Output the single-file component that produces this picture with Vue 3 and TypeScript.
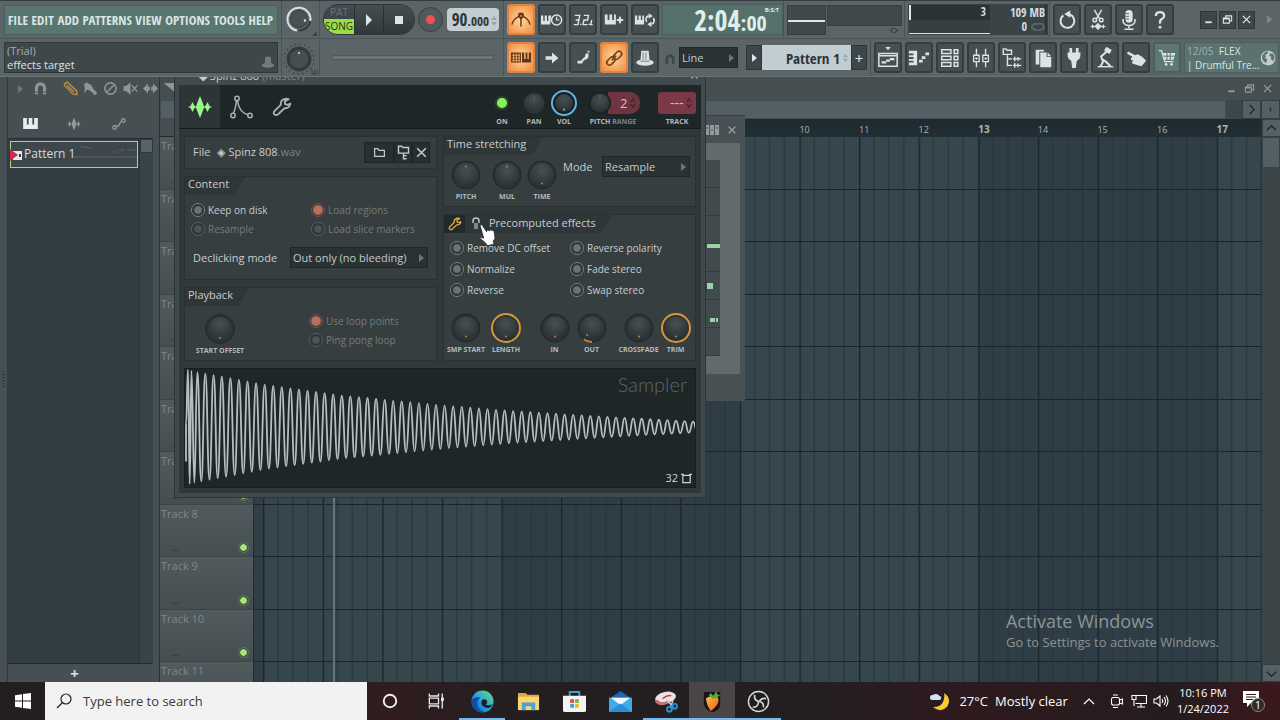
<script setup lang="ts">
interface KnobSpec {
  label: string
  /** pointer angle in degrees, 0 = up */
  angle: number
  ring?: 'orange' | 'blue' | 'out'
}
interface Toggle {
  label: string
  on?: boolean
  dim?: boolean
}

const menus = ['FILE', 'EDIT', 'ADD', 'PATTERNS', 'VIEW', 'OPTIONS', 'TOOLS', 'HELP']

const modeTools = [
  { icon: 'metronome', label: 'Metronome', lit: true },
  { icon: 'waitkeys', label: 'Wait for input', lit: false },
  { icon: 'countdown', label: 'Countdown', lit: false },
  { icon: 'overdub', label: 'Overdub', lit: false },
  { icon: 'looprec', label: 'Loop record', lit: false },
]
const editTools = [
  { icon: 'typing', label: 'Typing keyboard', lit: true },
  { icon: 'arrow', label: 'Step edit', lit: false },
  { icon: 'slide', label: 'Slide', lit: false },
  { icon: 'link', label: 'Link', lit: true },
  { icon: 'hat', label: 'Multilink', lit: false },
]
const fileTools = [
  { icon: 'undo', label: 'Undo' },
  { icon: 'cut', label: 'Cut' },
  { icon: 'mic', label: 'Record audio' },
  { icon: 'help', label: 'Help' },
]
const viewTools = [
  { icon: 'playlist', label: 'Playlist' },
  { icon: 'piano', label: 'Piano roll' },
  { icon: 'rack', label: 'Channel rack' },
  { icon: 'mixer', label: 'Mixer' },
  { icon: 'browser', label: 'Browser' },
  { icon: 'pages', label: 'Projects' },
  { icon: 'plug', label: 'Plugins' },
  { icon: 'tempo', label: 'Tempo tapper' },
  { icon: 'touch', label: 'Touch' },
]

const tracks = Array.from({ length: 11 }, (_, i) => `Track ${i + 1}`)

const barWidth = 59.6
const gridLeft = 9
const firstLabelledBar = 10
const bars = Array.from({ length: 17 }, (_, i) => ({
  n: i + 1,
  x: gridLeft + i * barWidth + 1,
  major: i % 4 === 0,
})).filter((b) => b.n >= firstLabelledBar)

const contentToggles: Toggle[] = [
  { label: 'Keep on disk' },
  { label: 'Load regions', on: true, dim: true },
  { label: 'Resample', dim: true },
  { label: 'Load slice markers', dim: true },
]
const loopToggles: Toggle[] = [
  { label: 'Use loop points', on: true, dim: true },
  { label: 'Ping pong loop', dim: true },
]
const effectToggles: Toggle[] = [
  { label: 'Remove DC offset' },
  { label: 'Reverse polarity' },
  { label: 'Normalize' },
  { label: 'Fade stereo' },
  { label: 'Reverse' },
  { label: 'Swap stereo' },
]
const stretchKnobs: KnobSpec[] = [
  { label: 'PITCH', angle: 0 },
  { label: 'MUL', angle: 0 },
  { label: 'TIME', angle: 180 },
]
const effectKnobs: KnobSpec[][] = [
  [
    { label: 'SMP START', angle: 180 },
    { label: 'LENGTH', angle: 180, ring: 'orange' },
  ],
  [
    { label: 'IN', angle: 180 },
    { label: 'OUT', angle: 215, ring: 'out' },
  ],
  [
    { label: 'CROSSFADE', angle: 180 },
    { label: 'TRIM', angle: 180, ring: 'orange' },
  ],
]

/** Amplitude envelope of the sample: [x, half height]. */
const envelope: [number, number][] = [
  [0, 59], [12, 56], [80, 43], [157, 32], [257, 22], [323, 16.5], [410, 11], [490, 6.5], [520, 5],
]
function amplitude(x: number): number {
  for (let i = 1; i < envelope.length; i++) {
    const [x0, a0] = envelope[i - 1]
    const [x1, a1] = envelope[i]
    if (x <= x1) return a0 + ((a1 - a0) * (x - x0)) / (x1 - x0)
  }
  return 5
}
function buildWave(): string {
  const mid = 59
  const peaks = [3, 6.4, 12.3, 20.3, 28.6, 36.8]
  while (peaks[peaks.length - 1] < 514) peaks.push(peaks[peaks.length - 1] + 8.57)
  let d = `M1 94 L1 56`
  let px = 1
  let py = 56
  const go = (x: number, y: number) => {
    const m = (px + x) / 2
    d += ` C${m.toFixed(1)} ${py.toFixed(1)} ${m.toFixed(1)} ${y.toFixed(1)} ${x.toFixed(1)} ${y.toFixed(1)}`
    px = x
    py = y
  }
  peaks.forEach((x, i) => {
    go(x, mid - amplitude(x))
    const next = peaks[i + 1]
    if (next !== undefined) {
      const t = (x + next) / 2
      go(t, mid + amplitude(t))
    }
  })
  return d
}
const wave = buildWave()

const apps = [
  { icon: 'cortana', label: 'Cortana', open: false, active: false },
  { icon: 'taskview', label: 'Task View', open: false, active: false },
  { icon: 'edge', label: 'Edge', open: true, active: false },
  { icon: 'folder', label: 'File Explorer', open: false, active: false },
  { icon: 'store', label: 'Store', open: false, active: false },
  { icon: 'mail', label: 'Mail', open: false, active: false },
  { icon: 'snip', label: 'Snipping Tool', open: true, active: false },
  { icon: 'fruit', label: 'Studio', open: true, active: true },
  { icon: 'obs', label: 'Recorder', open: true, active: false },
]
</script>

<template>
  <svg class="defs" aria-hidden="true">
    <defs>
      <radialGradient id="g-knob" cx="50%" cy="30%" r="70%">
        <stop offset="0" stop-color="#465052" />
        <stop offset="1" stop-color="#2a3133" />
      </radialGradient>
      <linearGradient id="g-edge" x1="0" y1="1" x2="1" y2="0">
        <stop offset="0" stop-color="#1259b0" />
        <stop offset="0.5" stop-color="#27a6de" />
        <stop offset="1" stop-color="#6fe06a" />
      </linearGradient>
      <linearGradient id="g-fruit" x1="0" y1="0" x2="1" y2="1">
        <stop offset="0" stop-color="#ffc043" />
        <stop offset="1" stop-color="#ee5a1c" />
      </linearGradient>
      <symbol id="i-keys" viewBox="0 0 16 12"><path fill="currentColor" d="M0 0h4v7h2V0h4v7h2V0h4v12H0z" /></symbol>
      <symbol id="i-metronome" viewBox="0 0 24 24"><path d="M12 4v15M2 17q2-7 8-9M22 17q-2-7-8-9" fill="none" stroke="#6b3414" stroke-width="1.600" /><path d="M9.500 4h5l1 4-3.500 4-3.500-4z" fill="#6b3414" /><circle cx="12" cy="7.500" r="1" fill="#e8a05c" /></symbol>
      <symbol id="i-waitkeys" viewBox="0 0 24 24"><path fill="currentColor" d="M0 7h2.500v6H4V7h2.500v6H8V7h3l-1 10H0z" /><circle cx="17" cy="12" r="5.500" fill="none" stroke="currentColor" stroke-width="1.600" /><path d="M17 8.500V12h3" fill="none" stroke="currentColor" stroke-width="1.300" /></symbol>
      <symbol id="i-countdown" viewBox="0 0 24 24"><path d="M3 7h5.500l-1 5H4M7.500 12l-1 5H2M13 7h5l-1 5h-4l-1 5h5M21.500 12l-1 5h2M9.500 16v1.500M19 16v1.500" fill="none" stroke="currentColor" stroke-width="1.500" /></symbol>
      <symbol id="i-overdub" viewBox="0 0 24 24"><path fill="currentColor" d="M2 6h3v6h2V6h3v6h2V6h2v11H2z" /><path d="M18.500 8.500v7M15 12h7" stroke="currentColor" stroke-width="2.200" /></symbol>
      <symbol id="i-looprec" viewBox="0 0 24 24"><path fill="currentColor" d="M1 7h2.500v5H5V7h2.500v5H9V7h2v10H1z" /><path d="M14 14a4 4 0 0 1 2-6.500M21 10a4 4 0 0 1-2 6.500" fill="none" stroke="currentColor" stroke-width="1.800" /><path fill="currentColor" d="M16 4.500l4.500 3-4.500 3zM19 19.500l-4.500-3 4.500-3z" /></symbol>
      <symbol id="i-typing" viewBox="0 0 24 24"><path fill="#6b3414" d="M1 6h11v11H1z" /><path d="M2 9h9M2 12h9M2 15h9M4 7v9M7 7v9M10 7v9" stroke="#f5b266" stroke-width=".9" /><path fill="#6b3414" d="M13 6h2.500v7h1.500V6h2v7h1.500V6H23v11H13z" /></symbol>
      <symbol id="i-arrow" viewBox="0 0 24 24"><path fill="currentColor" d="M5 10h7V6l7 6-7 6v-4H5z" /></symbol>
      <symbol id="i-slide" viewBox="0 0 24 24"><path fill="currentColor" d="M17 4h2v2h-2zM15 7h3v4q-1 3-4 3-2 1-3 4H6v-3h4q1-2 4-4z" /></symbol>
      <symbol id="i-link" viewBox="0 0 24 24"><g fill="none" stroke="#7a4117" stroke-width="1.800"><rect x="11" y="6" width="10" height="6" rx="3" transform="rotate(-45 16 9)" /><rect x="3.500" y="12.500" width="10" height="6" rx="3" transform="rotate(-45 8.500 15.500)" /><path d="M9.500 14.500l5-5" /></g></symbol>
      <symbol id="i-hat" viewBox="0 0 24 24"><path fill="currentColor" d="M8 4h8l1 11H7z" /><ellipse cx="12" cy="17" rx="9.500" ry="3.500" fill="currentColor" /><path d="M10 6v8M13 6v8M7 15.500h10" stroke="#6d787b" stroke-width="1" /></symbol>
      <symbol id="i-undo" viewBox="0 0 24 24"><path d="M8 7a7.500 7.500 0 1 0 7-1" fill="none" stroke="currentColor" stroke-width="2.200" /><path fill="currentColor" d="M15.500 1.500v8L9 5.500z" /></symbol>
      <symbol id="i-cut" viewBox="0 0 24 24"><g fill="none" stroke="currentColor" stroke-width="1.600"><path d="M8 1l6 10M16 1l-6 10" /><circle cx="8.500" cy="12" r="2" /><circle cx="15.500" cy="12" r="2" /></g><path fill="currentColor" d="M3 19l2-.5 1-2 1.500 2L9 18l3-3 3 3 1.500.5 1.500-2 1 2 2 .5-2 .5-1 2-1.500-2-1.500.5-3 3-3-3-1.500-.5-1.500 2-1-2z" /></symbol>
      <symbol id="i-mic" viewBox="0 0 24 24"><rect x="8" y="1" width="8" height="14" rx="4" fill="currentColor" /><path d="M8 5h4M8 8h4M8 11h4" stroke="#59656a" /><path d="M5.500 11v2a6.500 5 0 0 0 13 0v-2M12 18v3M7 22h10" fill="none" stroke="currentColor" stroke-width="1.700" /></symbol>
      <symbol id="i-help" viewBox="0 0 24 24"><path d="M7.500 7.500q0-4 4.500-4t4.500 4q0 2-2.500 3.500T12 16" fill="none" stroke="currentColor" stroke-width="2.500" /><circle cx="12" cy="20" r="1.600" fill="currentColor" /></symbol>
      <symbol id="i-playlist" viewBox="0 0 24 24"><path fill="currentColor" d="M9 0h6l-3 3.500z" /><path fill="none" stroke="currentColor" stroke-width="1.600" d="M2 7h20v14H2zM2 9.500h20" /><path fill="currentColor" d="M5 15.500h5V18H5zM10 13.500h4V16h-4zM14 12h5v2.500h-5z" /></symbol>
      <symbol id="i-piano" viewBox="0 0 24 24"><path fill="currentColor" d="M1 4h9v16H1v-3h5v-2H1v-2h5v-2H1V9h5V7H1zM12 14h4v3h-4zM15 10h4v3h-4zM19 6h4v3h-4z" /></symbol>
      <symbol id="i-rack" viewBox="0 0 24 24"><g fill="none" stroke="currentColor" stroke-width="1.600"><path d="M3 3h10v4H3zM3 10h10v4H3zM3 17h10v4H3zM16.500 3h4v4h-4zM16.500 10h4v4h-4zM16.500 17h4v4h-4z" /></g></symbol>
      <symbol id="i-mixer" viewBox="0 0 24 24"><path d="M7 2v20M17 2v20" stroke="currentColor" stroke-width="1.500" /><path d="M4 9h6v7H4zM14 9h6v7h-6z" fill="#39434a" stroke="currentColor" stroke-width="1.500" /><circle cx="7" cy="12.500" r="1.300" fill="currentColor" /><circle cx="17" cy="12.500" r="1.300" fill="currentColor" /></symbol>
      <symbol id="i-browser" viewBox="0 0 24 24"><g fill="none" stroke="currentColor" stroke-width="1.500"><path d="M2.500 2h3l1 1.500h5V8h-9zM7 9v12M7 13h5M7 20h5" /><path d="M13 13h9M13 20h9M15 10.500v5M18.500 11v4M15 17.500v5M18.500 18v4" /></g></symbol>
      <symbol id="i-pages" viewBox="0 0 24 24"><path fill="currentColor" d="M4 3h9v2H8v14H4z" /><path fill="currentColor" d="M9 6h7v5h5v11H9zM17 6l4 4h-4z" /></symbol>
      <symbol id="i-plug" viewBox="0 0 24 24"><path fill="currentColor" d="M7 1h3v5h4V1h3v5h2v3q0 4-4 6l-1 8h-4l-1-8q-4-2-4-6V6h2z" /></symbol>
      <symbol id="i-tempo" viewBox="0 0 24 24"><path d="M7 11L15 4M8 11l2 5-3 5M8 13l5 3 5 5" fill="none" stroke="currentColor" stroke-width="2.200" /><rect x="12" y="1" width="7" height="5" rx="1" transform="rotate(30 15 3)" fill="currentColor" /><path d="M4 21.500h17" stroke="currentColor" stroke-width="1.500" /></symbol>
      <symbol id="i-touch" viewBox="0 0 24 24"><path fill="currentColor" d="M2 7l1.500-2 7.500 4 3-1 5 3 4 4-5 6-4-1-6-2-.5-2 2-1-3-1v-2l2-1z" /></symbol>
      <symbol id="i-cart" viewBox="0 0 24 24"><path d="M3 4h3l3.500 12H19" fill="none" stroke="currentColor" stroke-width="1.500" /><path fill="currentColor" d="M7.500 6.500H21L19 14H9.500z" /><path d="M12 6v8M15.500 6v8M8 10h12" stroke="#55686a" /><circle cx="11" cy="19" r="1.500" fill="currentColor" /><circle cx="17" cy="19" r="1.500" fill="currentColor" /></symbol>
      <symbol id="i-globe" viewBox="0 0 24 24"><circle cx="12" cy="12" r="11" fill="#c3cccb" /><path fill="#5a7370" d="M4 7q4-5 8-5l-1 4-3 1 1 3-2 2 4 2-2 6q-5-3-6-8zM15 5l5 1 2 6-3 5-3-4 1-3-3-1z" /></symbol>
      <symbol id="i-magnet" viewBox="0 0 24 24"><path d="M5.500 21V11a6.500 6.500 0 0 1 13 0v10" fill="none" stroke="currentColor" stroke-width="5" /><path d="M2 17.500h7M15 17.500h7" stroke="#4a5457" stroke-width="1.500" /></symbol>
      <symbol id="i-sound" viewBox="0 0 24 24"><path fill="currentColor" d="M0 12l2.500-1L4.500 7l2 4L8 11.500 10 6l2-5 2 5 2 5.500 1.500-.5 2-4 2 4 2.500 1-2.500 1-2 4-2-4-1.500-.5-2 5.500-2 5-2-5-2-5.500-1.500.5-2 4-2-4z" /></symbol>
      <symbol id="i-env" viewBox="0 0 24 24"><g fill="none" stroke="currentColor" stroke-width="1.500"><circle cx="8" cy="3.500" r="2.200" /><circle cx="4" cy="20.500" r="2.200" /><circle cx="21" cy="20.500" r="2.200" /><path d="M7.500 6Q6.500 14 4.500 18M8.500 6q2 12 10.500 13.500" /></g></symbol>
      <symbol id="i-wrench" viewBox="0 0 24 24"><path fill="none" stroke="currentColor" stroke-width="2.200" stroke-linejoin="round" d="M22 8q-1 6-7 5.500L7 21q-2 1.500-4 0t0-4l7.500-7.500Q10 4 14.500 2.500q3-1 5.500 0L15.500 5v3.500l3.500 1z" /></symbol>
      <symbol id="i-folderline" viewBox="0 0 24 24"><path d="M3 5h6l2 3h10v11H3z" fill="none" stroke="currentColor" stroke-width="2.200" /></symbol>
      <symbol id="i-folderdown" viewBox="0 0 24 24"><path d="M4 2h5l2 2h9v9H4zM12 13v10M12 17h5M12 22h5" fill="none" stroke="currentColor" stroke-width="2.200" /></symbol>
      <symbol id="i-x" viewBox="0 0 24 24"><path d="M4 4l16 16M20 4L4 20" stroke="currentColor" stroke-width="2.800" /></symbol>
      <symbol id="i-min" viewBox="0 0 24 24"><path d="M5 18h14" stroke="currentColor" stroke-width="4" /></symbol>
      <symbol id="i-restore" viewBox="0 0 24 24"><path d="M3 9h13v11H3zM8 8V4h13v11h-5M3 11h13" fill="none" stroke="currentColor" stroke-width="2.400" /></symbol>
      <symbol id="i-pencil" viewBox="0 0 24 24"><path d="M2 7q1-5 5-5l15 14v6l-6-1zM6 7l12 11M10 5l11 10" fill="none" stroke="currentColor" stroke-width="2.200" /></symbol>
      <symbol id="i-brush" viewBox="0 0 24 24"><path fill="currentColor" d="M1 3l3 2 1-4 3 3 5 2 3 6-4 3-6-1-4 6 1-8z" /><path d="M12 12l9 9" stroke="currentColor" stroke-width="5.500" /></symbol>
      <symbol id="i-ban" viewBox="0 0 24 24"><circle cx="12" cy="12" r="9" fill="none" stroke="currentColor" stroke-width="2.500" /><path d="M6 18L18 6" stroke="currentColor" stroke-width="2.500" /></symbol>
      <symbol id="i-mute" viewBox="0 0 24 24"><path fill="currentColor" d="M1 8h4l7-6v20l-7-6H1z" /><path d="M14 7l9 10M23 7l-9 10" stroke="currentColor" stroke-width="2.200" /></symbol>
      <symbol id="i-slip" viewBox="0 0 24 24"><path fill="currentColor" d="M0 12l8-8v5h3v6H8v5zM24 12l-8-8v5h-3v6h3v5z" /></symbol>
      <symbol id="i-slice" viewBox="0 0 24 24"><path fill="currentColor" d="M1 3h22v18z" /></symbol>
      <symbol id="i-auto" viewBox="0 0 24 24"><g fill="none" stroke="currentColor" stroke-width="2.200"><circle cx="4.500" cy="18" r="3" /><circle cx="19.500" cy="6" r="3" /><path d="M7 16q5 0 6-4t4-5" /></g></symbol>
      <symbol id="i-cortana" viewBox="0 0 24 24"><circle cx="12" cy="12" r="7.500" fill="none" stroke="#f2f2f2" stroke-width="2.200" /></symbol>
      <symbol id="i-taskview" viewBox="0 0 24 24"><path d="M4 3v3h11V3M4 21v-3h11v3M4 8.500h11v7H4zM19.500 3v18" fill="none" stroke="#e8e8e8" stroke-width="1.600" /><path fill="#e8e8e8" d="M18 8h3.500v4H18z" /></symbol>
      <symbol id="i-edge" viewBox="0 0 24 24"><circle cx="12" cy="12" r="11.500" fill="url(#g-edge)" /><path fill="#0f4fa3" d="M1 10q4-4 9-2-4 2-3.500 7t7 8Q3 24 .8 14z" /><path fill="#231f20" d="M12 10q4-1 5 2 0 2-1.500 3.500 4 1 7-1-1 3-3 4-5 1-7.500-2t0-6.500z" /></symbol>
      <symbol id="i-folder" viewBox="0 0 24 24"><path fill="#e2a63a" d="M1 3h8l2 2h12v5H1z" /><path fill="#fbd571" d="M1 7h22v14H1z" /><path fill="#4aa3d8" d="M5 21v-8h14v8h-4v-4H9v4z" /></symbol>
      <symbol id="i-store" viewBox="0 0 24 24"><path d="M7 7V2h10v5" fill="none" stroke="#3aa0dc" stroke-width="2" /><path fill="#f4f4f4" d="M0 6h24v15q0 2-2 2H2q-2 0-2-2z" /><path fill="#e2502d" d="M7.500 9.500h4v4h-4z" /><path fill="#7db63a" d="M12.500 9.500h4v4h-4z" /><path fill="#3a9fdb" d="M7.500 14.500h4v4h-4z" /><path fill="#f2b52b" d="M12.500 14.500h4v4h-4z" /></symbol>
      <symbol id="i-mail" viewBox="0 0 24 24"><path fill="#1b66b8" d="M0 9l12-8 12 8z" /><path fill="#3fa9ea" d="M0 8h24v15H0z" /><path fill="#f4f8fc" d="M2 8h20l-10 8z" /><path fill="#2b8cd8" d="M0 23l12-9 12 9z" /></symbol>
      <symbol id="i-snip" viewBox="0 0 24 24"><ellipse cx="11" cy="8" rx="11" ry="6" fill="#e9e4e4" transform="rotate(-12 11 8)" /><path d="M1 11q5 6 14 1" stroke="#c26f72" stroke-width="3" fill="none" /><path d="M8 9q5-4 9-3" stroke="#c83f3f" stroke-width="1.500" fill="none" /><path d="M12 10l7 8M19 10l-3 9" stroke="#c7d8e4" stroke-width="1.500" /><circle cx="15" cy="20" r="2.500" fill="none" stroke="#2f90c9" stroke-width="2" /><circle cx="20.500" cy="17" r="2.500" fill="none" stroke="#2f90c9" stroke-width="2" /></symbol>
      <symbol id="i-fruit" viewBox="0 0 24 24"><path fill="#171515" d="M3 2h17v15q-3 6-9 6-6-2-8-8z" /><path fill="url(#g-fruit)" d="M5 9q3-3 7-2 4-1 6 1.500 1 4-2 8T10 22q-4-6-5-13z" /><path fill="#5cae34" d="M8 6l2-3 3 3 3-5 1 4 3 0-3 3-5 1z" /></symbol>
      <symbol id="i-obs" viewBox="0 0 24 24"><circle cx="12" cy="12" r="10.500" fill="#1f1d1e" stroke="#d8d8d8" stroke-width="1.500" /><g fill="none" stroke="#d8d8d8" stroke-width="1.700"><path d="M8 5q-1 6 5 7M20 9q-5-1-7 3M6 18q6 0 6-6" /><path d="M13 12q5 1 4 6" /></g></symbol>
    </defs>
  </svg>

  <div class="desktop">
    <header class="toolbar">
      <div class="bar">
        <div class="seg lead">
          <nav class="menu">
            <button v-for="m in menus" :key="m" type="button">{{ m }}</button>
          </nav>
        </div>
        <div class="seg dial">
          <svg class="dial-art" viewBox="0 0 34 34" role="img" aria-label="Main volume">
            <circle cx="15" cy="16" r="8.500" fill="#485255" stroke="#363f42" />
            <path d="M13 27.500A11.500 11.500 0 1 1 26.300 18" fill="none" stroke="#d8e0e2" stroke-width="2" />
            <path d="M26.300 18A11.500 11.500 0 0 1 15 27.500" fill="none" stroke="#323b3e" stroke-width="2" />
            <circle cx="21" cy="17.500" r="1.200" fill="#d8e0e2" />
            <path d="M33 28v5h-5z" fill="#394346" />
          </svg>
        </div>
        <div class="seg transport">
          <div class="pill">
            <button type="button" class="patsong"><span>PAT</span><span class="song">SONG</span></button>
            <button type="button" class="play" aria-label="Play"><svg viewBox="0 0 10 12"><path d="M2 0l6 6-6 6z" fill="#dde5e7" /></svg></button>
            <button type="button" class="stop" aria-label="Stop"><svg viewBox="0 0 10 12"><path d="M1 2h8v8H1z" fill="#dde5e7" /></svg></button>
          </div>
          <button type="button" class="record" aria-label="Record"></button>
          <div class="tempo"><span class="big">90</span><span class="small">.000</span><svg viewBox="0 0 6 10"><path d="M0 4l3-4 3 4zM0 6h6l-3 4z" fill="#98a7ad" /></svg></div>
        </div>
        <div class="seg tools">
          <button v-for="t in modeTools" :key="t.icon" type="button" class="tool" :class="{ lit: t.lit }" :aria-label="t.label"><svg><use :href="'#i-' + t.icon" /></svg></button>
          <div class="clockface"><span class="t">2:04</span><span class="cs">:00</span><span class="bst">B:S:T</span></div>
        </div>
        <div class="seg scopes">
          <div class="scope wide"></div>
          <div class="scope-col"><div class="scope"></div><svg class="eye" viewBox="0 0 12 10"><path d="M1 5q5-6 10 0-5 6-10 0z" fill="#3d474a" /><circle cx="6" cy="5" r="2" fill="#5d686b" /></svg></div>
        </div>
        <div class="seg cpu">
          <div class="cpu-box">
            <span>3</span><span class="mb">109 MB</span>
            <span class="cpu-graph"></span><span class="mb">0 <svg class="lips" viewBox="0 0 14 8"><path d="M0 4q4-5 7-3 3-2 7 3-7 7-14 0z" fill="none" stroke="#5a6467" stroke-width="2" /></svg></span>
          </div>
        </div>
        <div class="seg tools grow">
          <button v-for="t in fileTools" :key="t.icon" type="button" class="tool" :aria-label="t.label"><svg><use :href="'#i-' + t.icon" /></svg></button>
          <div class="winbtns">
            <button v-for="w in ['min', 'restore', 'x']" :key="w" type="button" :aria-label="w"><svg><use :href="'#i-' + w" /></svg></button>
            <svg class="more" viewBox="0 0 6 10"><path d="M0 0l6 5-6 5z" fill="#7d888b" /></svg>
          </div>
        </div>
      </div>

      <div class="bar">
        <div class="seg lead">
          <div class="hint"><span class="dimmed">(Trial)</span><span>effects target</span><svg class="hint-hat"><use href="#i-hat" /></svg></div>
        </div>
        <div class="seg dial">
          <svg class="dial-art" viewBox="0 0 34 34" role="img" aria-label="Main pitch">
            <circle cx="15" cy="18" r="15" fill="none" stroke="#3c4649" stroke-width="1.500" stroke-dasharray="1.500 3.200" />
            <circle cx="15" cy="18" r="12.500" fill="#353e41" />
            <circle cx="15" cy="18" r="10" fill="#454f52" stroke="#2c3436" />
            <circle cx="15" cy="12" r="1" fill="#d8e0e2" />
            <path d="M28 28v5M30.500 29v4M33 28v5M28 33h5" stroke="#394346" />
          </svg>
        </div>
        <div class="seg transport"><input class="songpos" type="range" aria-label="Song position" /></div>
        <div class="seg tools">
          <button v-for="t in editTools" :key="t.icon" type="button" class="tool" :class="{ lit: t.lit }" :aria-label="t.label"><svg><use :href="'#i-' + t.icon" /></svg></button>
          <svg class="snap-magnet"><use href="#i-magnet" /></svg>
          <div class="pick snap"><select aria-label="Snap"><option>Line</option></select><i class="caret"></i></div>
          <div class="pattern">
            <button type="button" aria-label="Previous"><i class="caret bright"></i></button>
            <span class="pname">Pattern 1<svg viewBox="0 0 6 10"><path d="M0 4l3-4 3 4zM0 6h6l-3 4z" fill="#98a7ad" /></svg></span>
            <button type="button">+</button>
          </div>
        </div>
        <div class="seg tools grow views">
          <button v-for="t in viewTools" :key="t.icon" type="button" class="tool" :aria-label="t.label"><svg><use :href="'#i-' + t.icon" /></svg></button>
          <button type="button" class="tool shop" aria-label="Shop"><svg><use href="#i-cart" /></svg></button>
          <div class="news"><div><span class="dimmed">12/05&nbsp; </span>FLEX<br />| Drumful Tre...</div><svg><use href="#i-globe" /></svg></div>
        </div>
      </div>
    </header>

    <main class="workspace">
      <aside class="edge-grip"><i></i></aside>
      <section class="picker">
        <div class="tools-row">
          <i class="caret"></i>
          <svg class="ic mag"><use href="#i-magnet" /></svg>
          <svg class="ic gold"><use href="#i-pencil" /></svg>
          <svg class="ic"><use href="#i-brush" /></svg>
          <svg class="ic"><use href="#i-ban" /></svg>
          <svg class="ic"><use href="#i-mute" /></svg>
          <svg class="ic"><use href="#i-slip" /></svg>
          <svg class="ic"><use href="#i-slice" /></svg>
        </div>
        <div class="tabs-row">
          <svg class="k"><use href="#i-keys" /></svg>
          <svg class="s"><use href="#i-sound" /></svg>
          <svg class="a"><use href="#i-auto" /></svg>
        </div>
        <div class="picker-body">
          <div class="picker-list">
            <button type="button" class="clip">
              <svg class="clip-mark" viewBox="0 0 12 12"><path d="M3 2h9v9H3z" fill="#e4eaeb" /><path d="M0 0l8 6-8 6z" fill="#c92b55" /><path d="M9 5h2v3H9z" fill="#303a3d" /></svg>
              Pattern 1
              <svg class="clip-notes" viewBox="0 0 64 20"><path d="M8 4h6M14 5h5M40 9h4M46 7h5M54 7h8M0 14h64" stroke="#5b676a" fill="none" /></svg>
            </button>
          </div>
          <div class="picker-scroll"><i></i></div>
        </div>
        <button type="button" class="add-pattern" aria-label="Add pattern">+</button>
      </section>

      <section class="playlist">
        <div class="pl-title">
          <button v-for="w in ['min', 'restore', 'x']" :key="w" type="button" :aria-label="w"><svg><use :href="'#i-' + w" /></svg></button>
        </div>
        <div class="pl-scroll"><div class="thumb"></div><span class="sq"><svg viewBox="0 0 12 12"><path d="M4 1l5 5-5 5" /></svg></span><span class="sq"><svg viewBox="0 0 12 12"><path d="M6 4v4" /></svg></span></div>
        <div class="pl-main">
          <div class="tracks">
            <div class="track-corner"></div>
            <div class="track-list">
              <div v-for="t in tracks" :key="t" class="track"><span>{{ t }}</span><span class="dots">...</span><i class="led"></i></div>
            </div>
          </div>
          <div class="arrange">
            <svg class="ruler">
              <text v-for="b in bars" :key="b.n" :x="b.x" y="14" :class="{ major: b.major }">{{ b.n }}</text>
            </svg>
            <div class="lanes">
              <svg class="lane-grid">
                <defs>
                  <pattern id="p-beats" :x="gridLeft" y="0" :width="barWidth" height="10" patternUnits="userSpaceOnUse">
                    <path d="M14.900 0v10M29.800 0v10M44.700 0v10" stroke="#26343c" stroke-width="1.200" />
                    <path d="M.7 0v10" stroke="#18252b" stroke-width="1.400" />
                  </pattern>
                  <pattern id="p-phrase" :x="gridLeft" y="0" :width="barWidth * 8" height="10" patternUnits="userSpaceOnUse">
                    <path d="M0 0h238.400v10H0z" fill="#36464d" />
                    <path d="M238.400 0h238.400v10H238.400z" fill="#2f3e46" />
                  </pattern>
                </defs>
                <rect width="100%" height="100%" fill="url(#p-phrase)" />
                <rect width="100%" height="100%" fill="url(#p-beats)" />
                <rect width="9" height="100%" fill="#313e45" />
              </svg>
              <div class="lane-rows"><div v-for="t in tracks" :key="t" class="lane"></div></div>
              <i class="playhead"></i>
              <div class="watermark"><p class="w1">Activate Windows</p><p class="w2">Go to Settings to activate Windows.</p></div>
            </div>
          </div>
          <div class="vscroll"><span class="sq"><svg viewBox="0 0 12 12"><path d="M1 8l5-5 5 5" /></svg></span><i class="vthumb"></i><span class="sq end"><svg viewBox="0 0 12 12"><path d="M1 4l5 5 5-5" /></svg></span></div>
        </div>
      </section>

      <section class="rack">
        <div class="rack-title"><svg viewBox="0 0 14 10"><path d="M0 0h4v10H0zM5 0h4v10H5zM10 0h4v10h-4z" fill="#929b9d" /><path d="M1.500 3h1M6.500 5h1M11.500 3h1" stroke="#4a5457" stroke-width="2" /></svg><svg class="rx"><use href="#i-x" /></svg></div>
        <div class="rack-body"><div class="rack-rows">
          <div v-for="n in 7" :key="n" class="rack-row" :class="'r' + n"><i></i></div>
        </div></div>
      </section>

      <section class="sampler">
        <div class="s-title"><span>◆ Spinz 808 <em>(master)</em></span><svg><use href="#i-x" /></svg></div>
        <div class="s-head">
          <button type="button" class="tab on" aria-label="Sample"><svg><use href="#i-sound" /></svg></button>
          <button type="button" class="tab" aria-label="Envelope"><svg><use href="#i-env" /></svg></button>
          <button type="button" class="tab" aria-label="Miscellaneous"><svg><use href="#i-wrench" /></svg></button>
          <div class="head-ctl">
            <div class="hc on-c"><i class="onled"></i><b>ON</b></div>
            <div class="hc pan"><svg viewBox="0 0 28 28"><circle cx="14" cy="14" r="10.500" fill="#2f3739" /><circle cx="14" cy="14" r="9" fill="url(#g-knob)" /><path d="M14 7v3" stroke="#59656a" /></svg><b>PAN</b></div>
            <div class="hc"><svg viewBox="0 0 28 28"><circle cx="14" cy="14" r="12" fill="#192022" stroke="#62b4dc" stroke-width="2" /><circle cx="14" cy="14" r="9" fill="url(#g-knob)" /><circle cx="14" cy="20.500" r="1" fill="#7cc4e8" /></svg><b>VOL</b></div>
            <div class="hc range"><div class="range-row"><svg viewBox="0 0 28 28"><circle cx="14" cy="14" r="11" fill="#192022" /><circle cx="14" cy="14" r="9.500" fill="url(#g-knob)" /><path d="M14 6v3" stroke="#59656a" /></svg><span>2<svg viewBox="0 0 6 12"><path d="M1 5l2-3 2 3M1 7l2 3 2-3" fill="none" stroke="#4a2029" stroke-width="1.300" /></svg></span></div><b>PITCH <em>RANGE</em></b></div>
            <div class="hc track-c"><span>---<svg viewBox="0 0 6 12"><path d="M1 5l2-3 2 3M1 7l2 3 2-3" fill="none" stroke="#4a2029" stroke-width="1.300" /></svg></span><b>TRACK</b></div>
          </div>
        </div>
        <div class="s-body">
          <div class="col">
            <div class="panel file">
              <span>File</span><span class="gem">◈</span><span class="fname">Spinz 808<em>.wav</em></span>
              <div class="fbtns">
                <button type="button" aria-label="Open"><svg><use href="#i-folderline" /></svg></button>
                <button type="button" aria-label="Save"><svg><use href="#i-folderdown" /></svg></button>
                <button type="button" aria-label="Clear"><svg><use href="#i-x" /></svg></button>
              </div>
            </div>
            <div class="panel content">
              <h3>Content</h3>
              <div class="checks">
                <label v-for="c in contentToggles" :key="c.label" :class="{ dim: c.dim }"><input type="checkbox" :checked="c.on" />{{ c.label }}</label>
              </div>
              <div class="declick">
                <label for="declick">Declicking mode</label>
                <div class="pick"><select id="declick"><option>Out only (no bleeding)</option></select><i class="caret"></i></div>
              </div>
            </div>
            <div class="panel playback">
              <h3>Playback</h3>
              <div class="pb-row">
                <div class="knob"><svg viewBox="0 0 32 32"><circle cx="16" cy="16" r="14.500" fill="#2b3234" stroke="#20282a" /><circle cx="16" cy="16" r="12" fill="url(#g-knob)" /><circle cx="16" cy="25" r="1" fill="#b08a45" /></svg><b>START OFFSET</b></div>
                <div class="loops">
                  <label v-for="c in loopToggles" :key="c.label" :class="{ dim: c.dim }"><input type="checkbox" :checked="c.on" />{{ c.label }}</label>
                </div>
              </div>
            </div>
          </div>
          <div class="col">
            <div class="panel stretch">
              <h3>Time stretching</h3>
              <div class="st-row">
                <div v-for="k in stretchKnobs" :key="k.label" class="knob">
                  <svg viewBox="0 0 32 32"><circle cx="16" cy="16" r="14" fill="#2b3234" stroke="#20282a" /><circle cx="16" cy="16" r="12" fill="url(#g-knob)" /><circle cx="16" cy="7.500" r="1" fill="#b08a45" :transform="`rotate(${k.angle} 16 16)`" /></svg><b>{{ k.label }}</b>
                </div>
                <label for="smode">Mode</label>
                <div class="pick"><select id="smode"><option>Resample</option></select><i class="caret"></i></div>
              </div>
            </div>
            <div class="panel effects">
              <div class="fx-head"><button type="button" aria-label="Options"><svg><use href="#i-wrench" /></svg></button><svg class="lockic" viewBox="0 0 10 14"><path d="M2 6V4q0-3 3-3t3 3v2" fill="none" stroke="#bfc7c8" stroke-width="1.500" /><path d="M3 6h4v6H3z" fill="#7d888b" /></svg><h3>Precomputed effects</h3></div>
              <div class="checks">
                <label v-for="c in effectToggles" :key="c.label"><input type="checkbox" />{{ c.label }}</label>
              </div>
              <div class="fx-knobs">
                <div v-for="(grp, gi) in effectKnobs" :key="gi" class="grp">
                  <div v-for="k in grp" :key="k.label" class="knob">
                    <svg viewBox="0 0 32 32">
                      <circle cx="16" cy="16" r="14" fill="#2b3234" :stroke="k.ring === 'orange' ? '#d8953a' : '#20282a'" :stroke-width="k.ring === 'orange' ? 2 : 1" />
                      <path v-if="k.ring === 'out'" d="M16 30A14 14 0 0 1 8 27.500" fill="none" stroke="#e2763a" stroke-width="2" />
                      <circle cx="16" cy="16" r="11.500" fill="url(#g-knob)" />
                      <circle cx="16" cy="7.500" r="1" fill="#b08a45" :transform="`rotate(${k.angle} 16 16)`" />
                    </svg><b>{{ k.label }}</b>
                  </div>
                </div>
              </div>
            </div>
          </div>
        </div>
        <div class="wavebox">
          <svg class="wave" viewBox="0 0 510 120" preserveAspectRatio="none"><path :d="wave" fill="none" stroke="#b7bebe" stroke-width="1.800" /></svg>
          <span class="brand">Sampler</span>
          <span class="bits">32 <svg viewBox="0 0 12 12"><path d="M2 2.500h8v8H2zM0 1.500h3M9 1.500h3" fill="none" stroke="#ced5d5" stroke-width="1.300" /></svg></span>
        </div>
      </section>

      <svg class="pointer" viewBox="0 0 18 22"><path d="M1 1q2-1 3 1l4 6 1-2 2 1 1-1 2 1 1-1 1 2 1 7-2 3 1 3-7 2-2-3-6-5 1-1 3 1z" fill="#fff" stroke="#1c2224" stroke-width=".8" /></svg>
    </main>

    <footer class="taskbar">
      <button type="button" class="start" aria-label="Start"><svg viewBox="0 0 16 16"><path fill="#fff" d="M0 2.200l7-1v6.300H0zM8 1l8-1v7.500H8zM0 8.500h7v6.300l-7-1zM8 8.500h8V16l-8-1z" /></svg></button>
      <label class="search"><svg viewBox="0 0 16 16"><circle cx="10" cy="6" r="5" fill="none" stroke="#222" stroke-width="1.200" /><path d="M6.500 9.500L1 15" stroke="#222" stroke-width="1.200" /></svg><input type="text" placeholder="Type here to search" aria-label="Search" /></label>
      <div class="apps">
        <button v-for="a in apps" :key="a.icon" type="button" :class="{ open: a.open, active: a.active }" :aria-label="a.label"><svg :class="a.icon"><use :href="'#i-' + a.icon" /></svg></button>
      </div>
      <div class="tray">
        <svg class="moon" viewBox="0 0 20 20"><path d="M14 2q5 3 5 8t-5 8-11-2q8 0 10-5t1-9z" fill="#f5cc33" /><path d="M2 9a2.500 2.500 0 0 1 1-5 4 3.500 0 0 1 6.500 1A2 2 0 0 1 9 9z" fill="#cfe4f5" /></svg>
        <span class="temp">27°C</span><span class="sky">Mostly clear</span>
        <svg class="chev" viewBox="0 0 12 8"><path d="M1 7l5-5 5 5" /></svg>
        <svg class="ti" viewBox="0 0 16 16"><rect x="2.500" y="4.500" width="8" height="7.500" rx="2" /><path d="M10.500 7l3-1v5l-3-1M4 2h5M4 14.500h5" /></svg>
        <svg class="ti" viewBox="0 0 16 16"><path d="M4.500 2.500h11v8h-11M10 10.500v3M6 14h8M1 2.500h4v4H1zM3 6.500V13" /></svg>
        <svg class="ti" viewBox="0 0 16 16"><path d="M1 6h2.500L7 3v10L3.500 10H1zM9 6q1.500 2 0 4M11 4q3 4 0 8M13 2.500q4 5.500 0 11" /></svg>
        <div class="clock"><span>10:16 PM</span><span>1/24/2022</span></div>
        <svg class="notif" viewBox="0 0 24 24"><path d="M1 2h16v12H9l-4 4v-4H1z" fill="#fff" /><path d="M4 5.500h10M4 8h10M4 10.500h7" stroke="#2a1c1f" /><circle cx="16" cy="16" r="6.500" fill="#2f2a2c" stroke="#8a8587" /><text x="16" y="20" text-anchor="middle">1</text></svg>
      </div>
    </footer>
  </div>
</template>

<style>
html, body { background: #36454c; }
</style>

<style scoped>
* { box-sizing: border-box; }
button, select, input { font: inherit; color: inherit; margin: 0; padding: 0; border: 0; background: none; }
svg { display: block; }
.defs { position: absolute; width: 0; height: 0; }
em { font-style: normal; color: #7b8587; }
.desktop { height: 100vh; display: flex; flex-direction: column; font: 11px/14px "Open Sans", "Noto Sans", sans-serif; color: #c6cdce; overflow: hidden; }
.dimmed { color: #a3adae; }
.caret { display: block; width: 0; height: 0; border: 4px solid transparent; border-left: 5px solid #6d777a; border-right: 0; }
.caret.bright { border-left-color: #e0e7e9; }

/* toolbar */
.toolbar { flex: none; height: 77px; background: #5b6568; border-top: 1px solid #333c3f; border-bottom: 1px solid #6a7477; display: flex; flex-direction: column; }
.bar { flex: 1; display: flex; }
.bar + .bar { border-top: 1px solid #4a5457; }
.seg { flex: none; display: flex; align-items: center; border-right: 1px solid #485255; }
.lead { width: 282px; padding: 0 3px 0 4px; }
.menu { flex: 1; height: 30px; display: flex; align-items: center; justify-content: space-between; padding: 0 4px 0 3px; background: #5a7671; border: 1px solid #495f5c; font: 13px/20px "Open Sans Condensed", "Open Sans", sans-serif; color: #dae7e5; }
.hint { flex: 1; height: 31px; position: relative; display: flex; flex-direction: column; justify-content: center; padding-left: 2px; background: #3e474a; border: 1px solid #2f3739; color: #dce3e4; }
.hint-hat { position: absolute; right: 1px; bottom: 1px; width: 16px; height: 18px; color: #727d80; }
.dial { width: 38px; }
.dial-art { width: 34px; height: 34px; margin-left: 2px; }
.transport { width: 184px; padding-left: 3px; }
.pill { display: flex; height: 31px; border-radius: 15px; overflow: hidden; background: #3a4346; border: 1px solid #2f3739; }
.pill button { width: 29px; display: flex; align-items: center; justify-content: center; border-right: 1px solid #272f31; background: linear-gradient(#454f52, #30383b); }
.pill .play svg, .pill .stop svg { width: 10px; height: 12px; }
.pill .stop { border-right: 0; width: 30px; }
.pill .patsong { flex-direction: column; width: 31px; color: #687376; font-size: 10px; line-height: 14px; }
.patsong .song { background: #9ddb4c; color: #24330d; width: 100%; height: 15px; }
.record { width: 25px; height: 25px; border-radius: 50%; margin: 0 4px 0 3px; background: radial-gradient(circle, #ee4f55 0 4px, #505a5d 5px); border: 1px solid #343d40; }
.tempo { width: 52px; height: 23px; display: flex; align-items: baseline; justify-content: flex-end; padding-right: 2px; border-radius: 4px; background: #c2cdd2; color: #2c363a; font-family: "Liberation Sans Narrow", "Open Sans Condensed", sans-serif; }
.tempo .big { font-size: 17px; line-height: 23px; }
.tempo .small { font-size: 13px; }
.tempo svg { width: 6px; height: 10px; margin-left: 2px; }
.tools { gap: 3px; padding-left: 3px; }
.tool { flex: none; width: 28px; height: 31px; display: flex; align-items: center; justify-content: center; border-radius: 3px; border: 2px solid #343d40; background: #465053; color: #dbe3e5; }
.tool svg { width: 22px; height: 22px; }
.tool.lit { background: radial-gradient(#ffd9a3, #f08c3c); border-color: #d98545; }
.tool.shop { background: #5c7774; border-color: #4b605e; }
.clockface { width: 121px; height: 31px; position: relative; display: flex; align-items: baseline; background: #56706c; border: 1px solid #4b605e; padding-left: 31px; color: #dfeeea; font-family: "Liberation Sans Narrow", "Open Sans Condensed", sans-serif; }
.clockface .t { font-size: 28px; line-height: 30px; }
.clockface .cs { font-size: 22px; }
.bst { position: absolute; right: 3px; top: 2px; font: bold 6px/7px "Open Sans", sans-serif; }
.scopes { width: 121px; gap: 1px; padding: 4px 2px 3px 3px; align-items: stretch; }
.scope { flex: 1; background: #3f494c; border: 1px solid #363f42; }
.scope.wide { flex: 0 0 39px; background: linear-gradient(#3f494c 14px, #dfe6e8 14px 16px, #3f494c 16px); }
.scope-col { flex: 1; display: flex; flex-direction: column; }
.scope-col .scope { flex: 0 0 21px; }
.eye { width: 12px; height: 9px; align-self: flex-end; margin-right: 2px; }
.cpu { width: 145px; padding-left: 3px; }
.cpu-box { width: 140px; height: 31px; display: grid; grid-template: 15px 14px / 81px 55px; background: #2b3336; border: 1px solid #394245; font: 12px/14px "Liberation Sans Narrow", "Open Sans Condensed", sans-serif; text-align: right; color: #d5dcde; }
.cpu-box span:first-child { border-left: 2px solid #e2e8ea; padding-right: 4px; }
.cpu-graph { border-bottom: 1px solid #dbe2e4; background: #363f42; }
.mb { background: #3a4346; display: flex; align-items: center; justify-content: flex-end; gap: 4px; }
.lips { width: 14px; height: 8px; }
.grow { flex: 1; border-right: 0; }
.winbtns { margin-left: auto; display: flex; gap: 2px; align-items: center; margin-right: 8px; }
.winbtns button { width: 17px; height: 18px; display: flex; align-items: center; justify-content: center; background: #3d4649; border: 1px solid #2f3739; color: #dde4e6; }
.winbtns button svg { width: 11px; height: 11px; }
.more { width: 5px; height: 9px; margin-left: 10px; }
.songpos { appearance: none; width: 162px; height: 5px; margin-left: 9px; background: #6c7679; border: 1px solid #505a5d; }
.songpos::-webkit-slider-thumb { appearance: none; width: 0; height: 0; }
.snap-magnet { width: 12px; height: 13px; margin: 4px 0 0 2px; color: #3c4649; }
.pick { position: relative; height: 21px; display: flex; align-items: center; background: #2b3234; border: 1px solid #202729; color: #c3cacb; }
.pick select { appearance: none; width: 100%; height: 100%; padding-left: 2px; outline: 0; }
.pick .caret { position: absolute; right: 3px; top: 6px; }
.snap { width: 59px; }
.pattern { display: flex; height: 25px; margin: 0 3px 0 5px; color: #e0e7e9; }
.pattern button { width: 16px; display: flex; align-items: center; justify-content: center; background: #3d4649; border: 1px solid #2f3739; font-size: 15px; }
.pname { width: 89px; display: flex; align-items: center; justify-content: flex-end; gap: 3px; padding-right: 3px; background: #c2cdd2; color: #2c363a; font: 15px/24px "Liberation Sans Narrow", "Open Sans Condensed", sans-serif; }
.pname svg { width: 5px; height: 10px; }
.news { flex: 1; min-width: 0; height: 31px; display: flex; align-items: center; justify-content: space-between; margin: 0 4px 0 0; padding: 0 2px; background: #5a7370; border: 1px solid #4b605e; font-size: 10px; line-height: 14px; color: #dce6e4; white-space: nowrap; }
.news svg { width: 16px; height: 16px; flex: none; }

/* workspace */
.workspace { flex: 1; min-height: 0; position: relative; display: flex; overflow: hidden; background: #454e51; }
.edge-grip { width: 8px; background: #465053; border-right: 1px solid #30393c; display: flex; align-items: center; justify-content: center; }
.edge-grip i { width: 3px; height: 18px; background: repeating-linear-gradient(#2f383b 0 1px, transparent 1px 3px); }
.picker { width: 151px; display: flex; flex-direction: column; background: #465053; }
.tools-row { height: 23px; display: flex; align-items: center; gap: 5px; padding-left: 10px; color: #8d9698; margin-right: -20px; }
.tools-row .ic { width: 15px; height: 15px; }
.tools-row .mag { margin: 0 10px 0 5px; }
.tools-row .gold { color: #b98f42; }
.tabs-row { height: 38px; display: flex; align-items: center; padding: 9px 0 0 15px; color: #929b9d; }
.tabs-row .k { width: 15px; height: 11px; color: #e8eeef; }
.tabs-row .s { width: 20px; height: 14px; margin: 0 27px 0 26px; }
.tabs-row .a { width: 16px; height: 14px; }
.picker-body { flex: 1; display: flex; margin-right: 6px; border-top: 1px solid #232c30; }
.picker-list { flex: 1; background: #333e44; padding: 2px 0 0 2px; }
.clip { position: relative; width: 128px; height: 27px; display: flex; align-items: center; padding: 0 0 2px 13px; background: #3d474b; border: 1px solid #a6d977; color: #d6dddf; font: 12px/16px "Open Sans", sans-serif; }
.clip-mark { position: absolute; left: -1px; top: 7px; width: 12px; height: 12px; }
.clip-notes { position: absolute; right: 0; top: 1px; width: 64px; height: 20px; }
.picker-scroll { width: 14px; background: #39434a; border-left: 1px solid #28323a; }
.picker-scroll i { display: block; height: 14px; background: #59646a; border: 1px solid #30393c; }
.add-pattern { height: 19px; margin-right: 6px; text-align: center; padding-right: 12px; border-top: 1px solid #222b2e; font: bold 15px/18px "Open Sans", sans-serif; color: #dbe2e4; }

.playlist { flex: 1; min-width: 0; display: flex; flex-direction: column; border-left: 1px solid #2a3336; }
.pl-title { height: 23px; display: flex; align-items: center; justify-content: flex-end; gap: 6px; padding-right: 6px; color: #929b9d; }
.pl-title button { width: 12px; }
.pl-title svg { width: 11px; height: 11px; }
.pl-scroll { height: 19px; display: flex; background: #3d4649; }
.pl-scroll .thumb { flex: 1; margin-right: 16px; background: #535f64; border: 1px solid #434d51; }
.sq { width: 19px; display: flex; align-items: center; justify-content: center; background: #536064; border: 1px solid #343d41; }
.sq svg { width: 11px; height: 11px; fill: none; stroke: #20292c; stroke-width: 1.500; }
.pl-main { flex: 1; min-height: 0; display: flex; overflow: hidden; }
.tracks { width: 93px; }
.track-corner { height: 18px; background: #465053; border-bottom: 1px solid #222b2e; }
.track { position: relative; height: 52px; padding: 2px 1px; background: linear-gradient(#515a5c, #454e50); border-bottom: 1px solid #3b4447; border-radius: 0 0 6px 0; color: #7f8789; font: 11px/14px "Open Sans", sans-serif; }
.track:nth-child(odd), .lane:nth-child(odd) { height: 53px; }
.dots { position: absolute; left: 11px; bottom: 2px; color: #2d3638; }
.led { position: absolute; right: 5px; bottom: 4px; width: 9px; height: 9px; border-radius: 50%; background: #a9e57a; border: 1px solid #2c3a2c; outline: 1px solid #5d7b5c; }
.arrange { flex: 1; display: flex; flex-direction: column; min-width: 0; }
.ruler { flex: none; width: 100%; height: 18px; background: linear-gradient(#1d2a2f, #223036); }
.ruler text { font: 9px "Open Sans", sans-serif; fill: #aab4b7; }
.ruler .major { font: bold 10px "Open Sans", sans-serif; }
.lanes { flex: 1; position: relative; border-left: 1px solid #222d32; overflow: hidden; }
.lane-grid { position: absolute; inset: 0; width: 100%; height: 100%; }
.lane-rows { position: relative; }
.lane { height: 52px; border-bottom: 1px solid #18252b; }
.playhead { position: absolute; left: 79px; top: 0; bottom: 0; width: 2px; background: #65727a; }
.watermark { position: absolute; right: 42px; bottom: 31px; color: #8b9497; }
.watermark p { margin: 0; }
.w1 { font-size: 18px; line-height: 24px; }
.w2 { font-size: 13px; line-height: 18px; }
.vscroll { width: 19px; display: flex; flex-direction: column; background: #3b4547; border-left: 1px solid #2b3437; }
.vscroll .sq { height: 18px; }
.vthumb { height: 31px; background: #535f64; border: 1px solid #394246; }
.vscroll .end { margin-top: auto; }

/* floating windows */
.rack { position: absolute; left: 560px; top: 38px; width: 185px; height: 286px; display: flex; flex-direction: column; background: #485254; border-top: 1px solid #363f42; }
.rack-title { height: 27px; display: flex; align-items: center; justify-content: flex-end; gap: 8px; padding-right: 8px; color: #a3abad; }
.rack-title svg { width: 14px; height: 10px; }
.rack-title .rx { width: 10px; }
.rack-body { height: 231px; margin-right: 5px; background: #616b6d; padding: 17px 20px 0 0; }
.rack-rows { background: #414b4d; }
.rack-row { height: 28px; border-bottom: 1px solid #333c3e; display: flex; align-items: center; padding-left: 147px; }
.rack-row i { display: block; }
.r4 { align-items: flex-start; }
.r4 i { width: 13px; height: 4px; background: #9bd3a8; }
.r5 i { width: 6px; height: 6px; background: #9bd3a8; }
.r6 i { width: 8px; height: 4px; margin: 12px 0 0 3px; background: repeating-linear-gradient(90deg, #9bd3a8 0 5px, transparent 5px 6px); }

.sampler { position: absolute; left: 175px; top: 0; width: 530px; border: solid #414b4d; border-width: 0 4px 4px; outline: 1px solid #2c3436; background: #31383a; }
.s-title { height: 8px; overflow: hidden; display: flex; justify-content: space-between; align-items: flex-end; padding: 0 2px 0 20px; background: #414b4d; line-height: 14px; }
.s-title svg { width: 9px; height: 9px; margin-bottom: 5px; }
.s-title span { margin-bottom: 2px; }
.s-head { height: 44px; display: flex; background: #1f2628; border-bottom: 1px solid #161c1e; }
.tab { width: 41px; display: flex; align-items: center; justify-content: center; color: #aab2b4; }
.tab.on { background: #2d3536; color: #97f88a; }
.tab svg { width: 24px; height: 24px; }
.tab:nth-child(3) svg { width: 20px; height: 20px; }
.head-ctl { margin-left: auto; display: flex; padding-right: 4px; }
.hc { width: 30px; display: flex; flex-direction: column; align-items: center; padding-top: 4px; }
.hc > svg, .range-row > svg { width: 28px; height: 28px; }
b { font: bold 7px/9px "Open Sans", sans-serif; color: #b2babb; white-space: nowrap; }
.on-c { width: 34px; }
.onled { width: 14px; height: 14px; margin: 7px; border-radius: 50%; background: #8bf060; border: 2px solid #2c4a25; }
.range { width: 76px; padding-right: 8px; }
.range-row { display: flex; }
.range-row > svg { position: relative; }
.range-row span { width: 32px; height: 22px; margin: 3px 0 0 -6px; padding-left: 12px; border-radius: 0 10px 10px 0; background: #6d3541; color: #e3b8bf; font: 13px/22px "Open Sans", sans-serif; display: flex; align-items: center; gap: 3px; }
.hc span svg { width: 6px; height: 12px; }
.track-c { width: 42px; padding-left: 2px; }
.track-c span { width: 38px; height: 22px; margin: 3px 0; padding-left: 12px; border-radius: 3px; background: #7a3947; color: #e3b8bf; font-size: 14px; line-height: 20px; display: flex; align-items: center; gap: 2px; }
.s-body { display: grid; grid-template-columns: 1fr 1fr; gap: 6px; padding: 7px 5px; }
.col { display: flex; flex-direction: column; gap: 7px; min-width: 0; }
.panel { background: #373e40; border: 1px solid #2a3133; }
h3 { margin: 0; width: max-content; height: 18px; padding: 0 16px 0 3px; font: 11px/14px "Open Sans", sans-serif; color: #c6cdce; background: #2f3638; clip-path: polygon(0 0, 100% 0, calc(100% - 10px) 100%, 0 100%); }
.file { height: 33px; display: flex; align-items: center; padding: 0 0 1px 8px; }
.gem { margin: 0 3px 0 7px; }
.fbtns { margin-left: auto; margin-right: 6px; display: flex; }
.fbtns button { width: 18px; height: 21px; display: flex; align-items: center; justify-content: center; background: #282f31; border: 1px solid #1f2527; }
.fbtns button:first-child { width: 30px; }
.fbtns svg { width: 13px; height: 13px; }
.fbtns button:nth-child(2) svg { width: 15px; height: 17px; }
.content { height: 104px; }
.playback { height: 74px; }
.stretch { height: 71px; }
.effects { height: 147px; }
label { display: flex; align-items: center; gap: 3px; white-space: nowrap; }
.dim { color: #737b7d; }
input[type='checkbox'] { appearance: none; flex: none; width: 14px; height: 14px; border-radius: 50%; border: 1px solid #7c8486; background: radial-gradient(circle, #6b7375 0 3px, #262d2f 5px); }
.dim input[type='checkbox'] { border-color: #596163; background: radial-gradient(circle, #4c5456 0 3px, #2b3234 5px); }
.dim input[type='checkbox']:checked { border-color: #74524c; background: radial-gradient(circle, #b5705f 0 4px, #3a2c2b 6px); }
.checks, .loops { font-size: 10px; }
.checks { display: grid; grid-template-columns: 120px 1fr; row-gap: 5px; }
.content .checks { padding: 8px 0 0 6px; }
.declick { display: flex; align-items: center; justify-content: space-between; padding: 11px 8px 0 8px; }
.declick .pick { width: 138px; }
.pb-row { display: flex; }
.knob { display: flex; flex-direction: column; align-items: center; width: 40px; }
.knob svg { width: 32px; height: 32px; }
.knob b { margin-top: 1px; }
.pb-row .knob { margin: 7px 0 0 15px; }
.loops { display: flex; flex-direction: column; gap: 5px; margin: 8px 0 0 69px; }
.st-row { display: flex; padding: 1px 0 0 2px; }
.st-row .knob { margin-top: 3px; }
.st-row .knob:nth-child(2) { width: 42px; }
.st-row .knob:nth-child(3) { width: 28px; }
.st-row label { height: 21px; margin: 0 auto 0 7px; }
.st-row .pick { width: 88px; margin-right: 5px; }
.fx-head { display: flex; align-items: center; height: 18px; background: #2f3638; width: max-content; clip-path: polygon(0 0, 100% 0, calc(100% - 10px) 100%, 0 100%); }
.fx-head h3 { line-height: 16px; }
.fx-head button { width: 21px; height: 18px; background: #23292b; color: #e2ac42; display: flex; align-items: center; justify-content: center; }
.fx-head button svg { width: 14px; height: 14px; }
.lockic { width: 10px; height: 14px; margin: 0 5px 0 6px; }
.effects .checks { padding: 8px 0 0 6px; row-gap: 7px; }
.fx-knobs { display: flex; gap: 10px; padding: 15px 0 0 2px; }
.grp { display: flex; }
.grp .knob { width: 37px; }
.grp:first-child .knob { width: 40px; }
.wavebox { position: relative; height: 120px; margin: 0 5px 5px; background: #1f2628; border: 1px solid #191f21; }
.wave { position: absolute; inset: 0; width: 100%; height: 100%; }
.brand { position: absolute; right: 8px; top: 3px; font: 300 20px/24px Lato, sans-serif; color: #5c6668; }
.bits { position: absolute; right: 3px; bottom: 2px; display: flex; align-items: center; gap: 3px; color: #ced5d5; }
.bits svg { width: 11px; height: 11px; }
.pointer { position: absolute; left: 479px; top: 147px; width: 17px; height: 21px; }

/* taskbar */
.taskbar { flex: none; height: 38px; display: flex; background: linear-gradient(90deg, #231f20 0 26%, #311c1f 30%, #231f20 40% 62%, #2e1a1e 75%, #251c1f 92%, #3b181c); color: #fff; font: 13px/16px "Open Sans", sans-serif; }
.start { width: 45px; display: flex; align-items: center; justify-content: center; }
.start svg { width: 16px; height: 16px; }
.search { width: 322px; background: #f2f2f2; gap: 11px; padding-left: 11px; }
.search svg { width: 16px; height: 16px; flex: none; }
.search input { flex: 1; outline: 0; color: #333; }
.search input::placeholder { color: #3a3a3a; opacity: 1; }
.apps { display: flex; }
.apps button { width: 46px; display: flex; align-items: center; justify-content: center; }
.apps button.open { box-shadow: inset 0 -2px #76b9ed; }
.apps button.active { background: #4a4647; }
.apps svg { width: 23px; height: 23px; }
.apps .cortana, .apps .taskview { width: 20px; height: 20px; }
.tray { margin-left: auto; display: flex; align-items: center; padding-right: 3px; }
.moon { width: 20px; height: 20px; margin-right: 9px; }
.temp { margin-right: 7px; }
.chev { width: 12px; height: 8px; margin: 0 14px 0 15px; fill: none; stroke: #fff; stroke-width: 1.200; }
.ti { width: 16px; height: 16px; margin-right: 6px; fill: none; stroke: #fff; stroke-width: 1.100; }
.clock { display: flex; flex-direction: column; align-items: center; margin: 0 13px 0 2px; font-size: 11px; }
.notif { width: 24px; height: 24px; margin-right: 11px; }
.notif text { font: 11px "Open Sans", sans-serif; fill: #fff; }
</style>
